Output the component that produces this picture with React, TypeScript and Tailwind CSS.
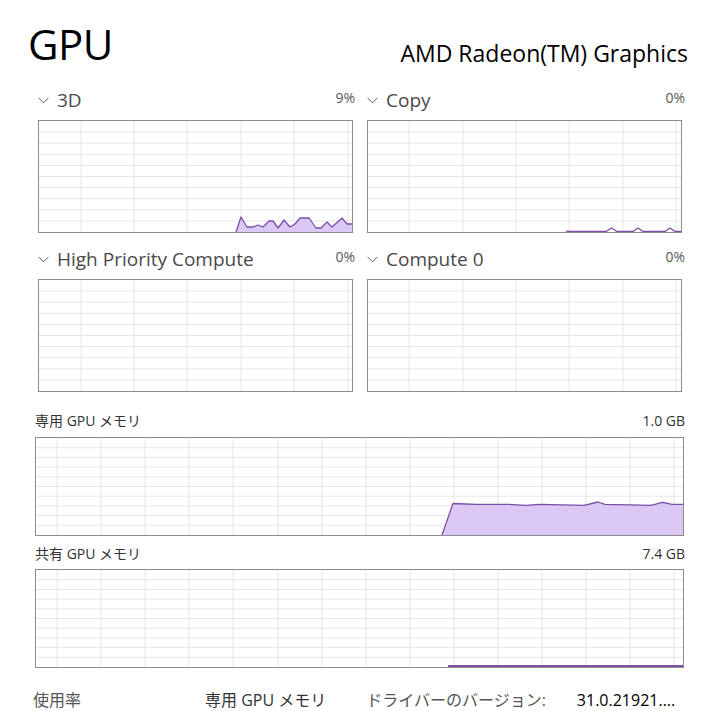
import React from "react";

const LINE = "#7b4fa8";
const FILL = "#dcc8f4";
const GRID = "#e6e6e6";

type GraphProps = {
  w: number;
  h: number;
  vx: number[];
  rows: number;
  fillPts?: [number, number][];
  linePts?: [number, number][];
  bottomBar?: [number, number];
  box: string;
};

function Graph({ w, h, vx, rows, fillPts, linePts, bottomBar, box }: GraphProps) {
  const hs: number[] = [];
  for (let i = 1; i < rows; i++) hs.push((h / rows) * i);
  const toStr = (p: [number, number][]) => p.map(([x, y]) => `${x},${y}`).join(" ");
  return (
    <div className={`border border-[#8c8c8c] box-border bg-white ${box}`}>
      <svg width={w} height={h} className="block">
        {hs.map((y, i) => (
          <line key={"h" + i} x1={0} x2={w} y1={y} y2={y} stroke={GRID} strokeWidth={1} />
        ))}
        {vx.map((x, i) => (
          <line key={"v" + i} x1={x} x2={x} y1={0} y2={h} stroke={GRID} strokeWidth={1} />
        ))}
        {fillPts && (
          <polygon points={toStr(fillPts)} fill={FILL} stroke="none" />
        )}
        {linePts && (
          <polyline points={toStr(linePts)} fill="none" stroke={LINE} strokeWidth={1.3} strokeLinejoin="round" />
        )}
        {bottomBar && (
          <rect x={bottomBar[0]} y={h - 2} width={bottomBar[1] - bottomBar[0]} height={2} fill={LINE} />
        )}
      </svg>
    </div>
  );
}

function Chevron() {
  return (
    <svg width="11" height="7" viewBox="0 0 11 7" className="block">
      <polyline points="0.5,0.8 5.5,5.8 10.5,0.8" fill="none" stroke="#5a5a5a" strokeWidth="1" />
    </svg>
  );
}

function SmallLabel({ name, pct }: { name: string; pct: string }) {
  return (
    <div className="h-[24px] flex items-center justify-between">
      <div className="flex items-center">
        <Chevron />
        <span className="ml-[8px] text-[19px] leading-[24px] text-[#4a4a4a]">{name}</span>
      </div>
      <span className="text-[14px] leading-[20px] text-[#5a5a5a] self-start">{pct}</span>
    </div>
  );
}

const d3: [number, number][] = [
  [197, 111], [202, 96], [208, 106], [214, 106], [219, 104], [224, 106], [230, 100], [234, 100],
  [239, 107], [245, 99], [251, 106], [256, 103], [261, 97], [270, 97], [277, 107], [282, 107],
  [288, 101], [293, 106], [303, 97], [308, 103], [313, 103],
];
const d3Fill: [number, number][] = [...d3, [313, 111]];

const copyLine: [number, number][] = [
  [198, 110.5], [238, 110.5], [243.5, 107], [249, 110.5], [265, 110.5], [270, 107], [275, 110.5],
  [297, 110.5], [302, 107], [307, 110.5], [313, 110.5],
];

const memLine: [number, number][] = [
  [406, 97], [417, 65.5], [430, 66], [440, 66.3], [472, 66.3], [490, 67.3], [504, 66.3], [548, 67.3],
  [562, 64], [569, 66.3], [615, 67.3], [626.5, 64.3], [636, 66.3], [647, 66.3],
];
const memFill: [number, number][] = [...memLine, [647, 97]];

const vSmallA = [42, 95, 148, 202, 255, 309];
const vSmallB = [41, 95, 148, 201, 255, 308];
const vMem = Array.from({ length: 15 }, (_, i) => Math.round(21 + i * 44.1));

export default function App() {
  return (
    <div
      className="w-[724px] h-[711px] overflow-hidden bg-white text-[#1a1a1a]"
      style={{ fontFamily: '"Open Sans", "Noto Sans CJK JP", sans-serif' }}
    >
      {/* header */}
      <div className="h-[88px] flex justify-between items-start pl-[28px] pr-[36px] pt-[18px]">
        <span className="text-[42px] leading-[52px] text-black tracking-[-0.5px]">GPU</span>
        <span className="text-[23px] leading-[30px] text-black mt-[20px]">AMD Radeon(TM) Graphics</span>
      </div>

      {/* engine graphs */}
      <div className="pl-[38px] grid grid-cols-[317px_318px] gap-x-[12px]">
        <div>
          <SmallLabel name="3D" pct="9%" />
          <div className="mt-[8px]">
            <Graph box="w-[315px] h-[113px]" w={313} h={111} vx={vSmallA} rows={10} fillPts={d3Fill} linePts={d3} />
          </div>
        </div>
        <div>
          <SmallLabel name="Copy" pct="0%" />
          <div className="mt-[8px]">
            <Graph box="w-[315px] h-[113px]" w={313} h={111} vx={vSmallB} rows={10} linePts={copyLine} />
          </div>
        </div>
        <div className="mt-[14px]">
          <SmallLabel name="High Priority Compute" pct="0%" />
          <div className="mt-[8px]">
            <Graph box="w-[315px] h-[113px]" w={313} h={111} vx={vSmallA} rows={10} />
          </div>
        </div>
        <div className="mt-[14px]">
          <SmallLabel name="Compute 0" pct="0%" />
          <div className="mt-[8px]">
            <Graph box="w-[315px] h-[113px]" w={313} h={111} vx={vSmallB} rows={10} />
          </div>
        </div>
      </div>

      {/* memory graphs */}
      <div className="pl-[35px] pr-[39px] mt-[18px]">
        <div className="h-[20px] flex items-center justify-between text-[14px] text-[#333]">
          <span>専用 GPU メモリ</span>
          <span>1.0 GB</span>
        </div>
        <div className="mt-[7px]">
          <Graph box="w-[649px] h-[99px]" w={647} h={97} vx={vMem} rows={10} fillPts={memFill} linePts={memLine} />
        </div>
        <div className="h-[20px] mt-[7px] flex items-center justify-between text-[14px] text-[#333]">
          <span>共有 GPU メモリ</span>
          <span>7.4 GB</span>
        </div>
        <div className="mt-[6px]">
          <Graph box="w-[649px] h-[99px]" w={647} h={97} vx={vMem} rows={10} bottomBar={[412, 647]} />
        </div>
      </div>

      {/* bottom info row */}
      <div className="mt-[20px] flex items-center h-[24px] text-[16px] text-[#333]">
        <span className="ml-[33px] text-[#555]">使用率</span>
        <span className="ml-[124px]">専用 GPU メモリ</span>
        <span className="ml-[40px] text-[#555]">ドライバーのバージョン:</span>
        <span className="ml-[31px] text-black">31.0.21921....</span>
      </div>
    </div>
  );
}
